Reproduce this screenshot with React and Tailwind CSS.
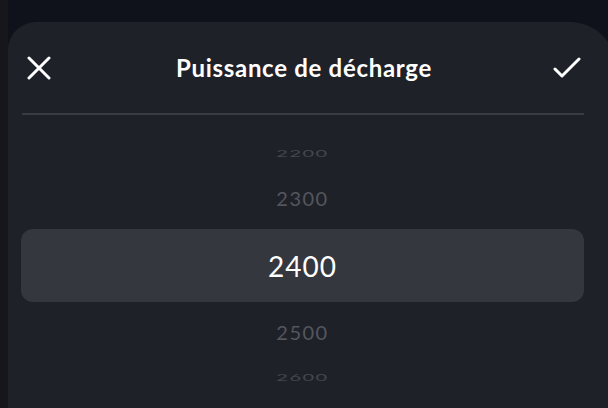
import React from "react";

function XIcon() {
  return (
    <svg width="24" height="24" viewBox="0 0 24 24" fill="none" stroke="white" strokeWidth="3" strokeLinecap="round">
      <path d="M2 2L22 22M22 2L2 22" />
    </svg>
  );
}

function CheckIcon() {
  return (
    <svg width="28" height="22" viewBox="0 0 28 22" fill="none" stroke="white" strokeWidth="3" strokeLinecap="round" strokeLinejoin="round">
      <path d="M2 12L9 19L26 2" />
    </svg>
  );
}

export default function App() {
  const font = { fontFamily: "Lato, 'Noto Sans', sans-serif" };
  return (
    <div className="w-[608px] h-[408px] bg-[#0f121b] overflow-hidden flex" style={font}>
      <div className="w-[8px] shrink-0 bg-[#16171b]" />
      <div className="w-[608px] shrink-0 mt-[22px] bg-[#1f2129] rounded-tl-[28px] rounded-tr-[46px] flex flex-col">
        <div className="h-[91px] pl-[19px] pr-[35px] grid grid-cols-[40px_1fr_40px] items-center">
          <div className="flex justify-start">
            <XIcon />
          </div>
          <div className="text-center text-white text-[24px] font-bold tracking-[0.7px]">
            Puissance de décharge
          </div>
          <div className="flex justify-end">
            <CheckIcon />
          </div>
        </div>
        <div className="ml-[14px] mr-[32px] h-[2px] bg-[#383b43]" />
        <div className="ml-[13px] mr-[32px] flex flex-col">
          <div className="h-[61px] flex items-end justify-center pb-[13px]">
            <span className="text-[20px] leading-none text-[#45474e] scale-y-[0.45] tracking-[1.5px]">2200</span>
          </div>
          <div className="h-[44px] flex items-center justify-center">
            <span className="text-[20px] leading-none text-[#54565d] tracking-[1.5px]">2300</span>
          </div>
          <div className="mt-[9px] h-[73px] rounded-[12px] bg-[#35373f] flex items-center justify-center">
            <span className="text-[28px] leading-none text-white tracking-[1px]">2400</span>
          </div>
          <div className="mt-[8px] h-[44px] flex items-center justify-center">
            <span className="text-[20px] leading-none text-[#54565d] tracking-[1.5px]">2500</span>
          </div>
          <div className="h-[44px] flex items-start justify-center pt-[13px]">
            <span className="text-[20px] leading-none text-[#45474e] scale-y-[0.45] tracking-[1.5px]">2600</span>
          </div>
        </div>
      </div>
    </div>
  );
}
